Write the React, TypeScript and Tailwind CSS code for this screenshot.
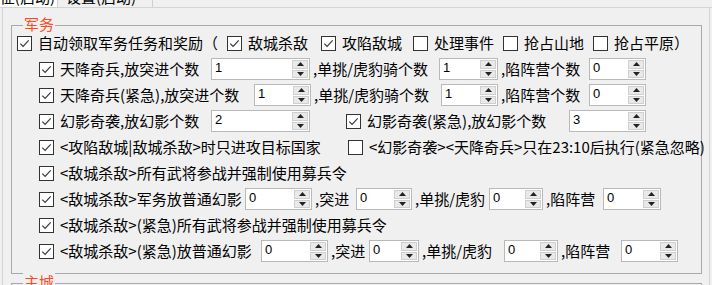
import type { ReactNode } from 'react';

const CJK = "font-['Noto_Sans_CJK_SC','Noto_Sans',sans-serif]";

function Check({ on }: { on?: boolean }) {
    return (
        <span className="flex h-[15px] w-[15px] shrink-0 items-center justify-center border border-[#333] bg-white">
            {on && (
                <svg width="11" height="11" viewBox="0 0 11 11">
                    <path d="M1.3 5.6 L4.1 8.4 L9.7 2.3" fill="none" stroke="#333" strokeWidth="1.1" />
                </svg>
            )}
        </span>
    );
}

function Arrow({ up }: { up?: boolean }) {
    return (
        <svg width="7" height="4" viewBox="0 0 7 4">
            <path d={up ? 'M0 4 L3.5 0 L7 4 Z' : 'M0 0 L3.5 4 L7 0 Z'} fill="#222" />
        </svg>
    );
}

function Spin({ v, className }: { v: string; className: string }) {
    return (
        <span className={`flex h-[22px] shrink-0 border border-[#b9b9b9] bg-white ${className}`}>
            <span className="flex-1 pl-[3px] pt-[1px] font-['Liberation_Sans',sans-serif] text-[13px] leading-[16px]">{v}</span>
            <span className="flex w-[17px] flex-col gap-[1px] py-[1px] pr-[1px]">
                <span className="flex flex-1 items-center justify-center border border-[#cfcfcf] bg-[#e9e9e9]">
                    <Arrow up />
                </span>
                <span className="flex flex-1 items-center justify-center border border-[#cfcfcf] bg-[#e9e9e9]">
                    <Arrow />
                </span>
            </span>
        </span>
    );
}

function T({ children, className = '' }: { children: ReactNode; className?: string }) {
    return <span className={`shrink-0 whitespace-nowrap ${className}`}>{children}</span>;
}

function Row({ children, first }: { children: ReactNode; first?: boolean }) {
    return <div className={`flex h-[26px] items-center ${first ? 'pl-[5px]' : 'pl-[27px]'}`}>{children}</div>;
}

export default function App() {
    return (
        <div className={`relative h-[285px] w-[712px] overflow-hidden bg-[#f0f0f0] text-[15px] leading-[18px] text-black ${CJK}`}>
            {/* tab strip, mostly scrolled off the top */}
            <div className="flex h-[8px] overflow-hidden border-b border-[#d4d4d4] bg-[#f0f0f0]">
                <div className="-mt-[12px] flex h-[20px] w-[58px] justify-end border-r border-[#cfcfcf] bg-white pr-[2px]">
                    <span className="whitespace-nowrap">出征(启动)</span>
                </div>
                <div className="-mt-[12px] flex h-[20px] w-[95px] border-r border-[#cfcfcf] pl-[8px]">
                    <span className="whitespace-nowrap">设置(启动)</span>
                </div>
            </div>

            <div className="h-[277px] border-x border-[#d4d4d4] pl-[8px] pt-[17px] mx-[2px]">
                {/* 军务 group */}
                <div className="relative h-[249px] w-[691px] border border-[#a9a9a9] pt-[4px]">
                    <span className="absolute left-[11px] top-[-11px] bg-[#f0f0f0] px-[1px] text-[#ff4b1f]">军务</span>

                    <Row first>
                        <Check on />
                        <T className="ml-[6px] w-[189px]">自动领取军务任务和奖励（</T>
                        <Check on />
                        <T className="ml-[6px] w-[73px]">敌城杀敌</T>
                        <Check on />
                        <T className="ml-[6px] w-[71px]">攻陷敌城</T>
                        <Check />
                        <T className="ml-[6px] w-[69px]">处理事件</T>
                        <Check />
                        <T className="ml-[6px] w-[69px]">抢占山地</T>
                        <Check />
                        <T className="ml-[6px]">抢占平原）</T>
                    </Row>

                    <Row>
                        <Check on />
                        <T className="ml-[6px] w-[151px]">天降奇兵,放突进个数</T>
                        <Spin v="1" className="w-[99px]" />
                        <T className="w-[129px] pl-[3px]">,单挑/虎豹骑个数</T>
                        <Spin v="1" className="w-[59px]" />
                        <T className="w-[91px] pl-[3px]">,陷阵营个数</T>
                        <Spin v="0" className="w-[57px]" />
                    </Row>

                    <Row>
                        <Check on />
                        <T className="ml-[6px] w-[194px]">天降奇兵(紧急),放突进个数</T>
                        <Spin v="1" className="w-[57px]" />
                        <T className="w-[130px] pl-[3px]">,单挑/虎豹骑个数</T>
                        <Spin v="1" className="w-[57px]" />
                        <T className="w-[91px] pl-[3px]">,陷阵营个数</T>
                        <Spin v="0" className="w-[57px]" />
                    </Row>

                    <Row>
                        <Check on />
                        <T className="ml-[6px] w-[151px]">幻影奇袭,放幻影个数</T>
                        <Spin v="2" className="w-[99px]" />
                        <span className="w-[36px] shrink-0" />
                        <Check on />
                        <T className="ml-[6px] w-[202px]">幻影奇袭(紧急),放幻影个数</T>
                        <Spin v="3" className="w-[77px]" />
                    </Row>

                    <Row>
                        <Check on />
                        <T className="ml-[6px] w-[288px]">&lt;攻陷敌城|敌城杀敌&gt;时只进攻目标国家</T>
                        <Check />
                        <T className="ml-[6px]">&lt;幻影奇袭&gt;&lt;天降奇兵&gt;只在23:10后执行(紧急忽略)</T>
                    </Row>

                    <Row>
                        <Check on />
                        <T className="ml-[6px]">&lt;敌城杀敌&gt;所有武将参战并强制使用募兵令</T>
                    </Row>

                    <Row>
                        <Check on />
                        <T className="ml-[6px] w-[185px]">&lt;敌城杀敌&gt;军务放普通幻影</T>
                        <Spin v="0" className="w-[67px]" />
                        <T className="w-[44px] pl-[3px]">,突进</T>
                        <Spin v="0" className="w-[56px]" />
                        <T className="w-[77px] pl-[3px]">,单挑/虎豹</T>
                        <Spin v="0" className="w-[54px]" />
                        <T className="w-[60px] pl-[3px]">,陷阵营</T>
                        <Spin v="0" className="w-[58px]" />
                    </Row>

                    <Row>
                        <Check on />
                        <T className="ml-[6px]">&lt;敌城杀敌&gt;(紧急)所有武将参战并强制使用募兵令</T>
                    </Row>

                    <Row>
                        <Check on />
                        <T className="ml-[6px] w-[201px]">&lt;敌城杀敌&gt;(紧急)放普通幻影</T>
                        <Spin v="0" className="w-[67px]" />
                        <T className="w-[41px] pl-[3px]">,突进</T>
                        <Spin v="0" className="w-[50px]" />
                        <T className="w-[85px] pl-[3px]">,单挑/虎豹</T>
                        <Spin v="0" className="w-[54px]" />
                        <T className="w-[63px] pl-[3px]">,陷阵营</T>
                        <Spin v="0" className="w-[57px]" />
                    </Row>
                </div>

                {/* next group, cut off by the window */}
                <div className="relative mt-[9px] h-[40px] w-[691px] border border-[#a9a9a9]">
                    <span className="absolute left-[11px] top-[-11px] bg-[#f0f0f0] px-[1px] text-[#ff4b1f]">主城</span>
                </div>
            </div>
        </div>
    );
}
